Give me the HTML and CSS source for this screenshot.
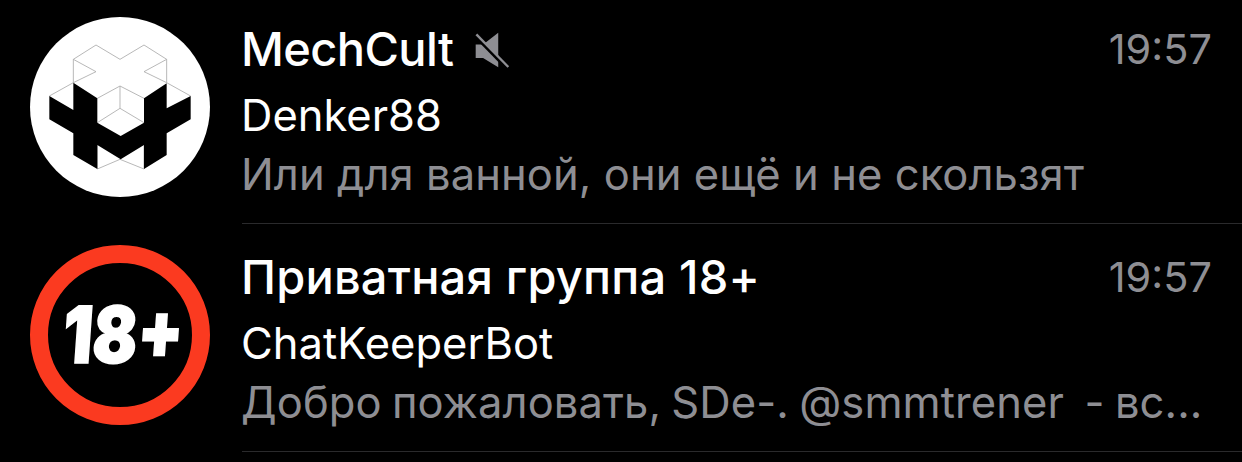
FILE: index.html
```html
<!DOCTYPE html>
<html lang="ru">
<head>
    <meta charset="UTF-8">
    <title>Chats</title>
    <link rel="stylesheet" href="styles.css">
</head>
<body>

<main class="chat-list">
    <section class="chat">
        <svg class="avatar" viewBox="30 51 540 540">
            <circle cx="300" cy="321" r="270" fill="#fff"/>
            <path class="lines" d="M160 248V178L228 135L300 178L372 135L440 178V248M160 178L228 215L160 248L88 288M440 178L372 215L440 248L512 288M232 295L300 258L372 295M300 258V325M232 368L300 325L372 368M232 435V507L300 478L372 507V435"/>
            <path d="M88 288L160 330V248L232 295V368L302 408L372 368V295L440 250V325L512 288V358L440 400V465L372 507V435L302 478L232 435V507L160 465V400L88 358Z"/>
        </svg>
        <div class="chat-body">
            <div class="chat-head">
                <h2 class="chat-title chat-title-latin">MechCult</h2>
                <svg class="mute" viewBox="100 35 110 110">
                    <path d="M108 75H130L175 40V143L130 115H108Z"/>
                    <path class="mute-gap" d="M106 50L201 147"/>
                    <path class="mute-line" d="M110 45L205 142"/>
                </svg>
                <time class="chat-time">19:57</time>
            </div>
            <div class="chat-sender">Denker88</div>
            <div class="chat-text">Или для ванной, они ещё и не скользят</div>
        </div>
    </section>

    <section class="chat">
        <svg class="avatar" viewBox="30 30 540 540">
            <circle cx="300" cy="300" r="243" stroke="#fb3a20" stroke-width="54"/>
            <text class="age" transform="translate(124 384) skewX(-4)" textLength="360" lengthAdjust="spacingAndGlyphs">18+</text>
        </svg>
        <div class="chat-body">
            <div class="chat-head">
                <h2 class="chat-title">Приватная группа 18+</h2>
                <time class="chat-time">19:57</time>
            </div>
            <div class="chat-sender">ChatKeeperBot</div>
            <div class="chat-text chat-text-mixed">Добро пожаловать, SDe-. @smmtrener&nbsp; - вс...</div>
        </div>
    </section>
</main>

</body>
</html>
```

FILE: styles.css
```css
:root {
    --bg-color: #000000;
    --text-color: #ffffff;
    --muted-color: #8e8e93;
    --border-color: #2a2a2c;
}

* { margin: 0; padding: 0; box-sizing: border-box; }

body {
    background-color: var(--bg-color);
    color: var(--text-color);
    font-family: 'Inter', 'Noto Sans', sans-serif;
    overflow: hidden;
}

.chat-list {
    padding-left: 30px;
    margin-top: -4px;
}

.chat {
    display: flex;
    gap: 32px;
    height: 228px;
    padding-top: 21px;
}

.avatar {
    flex: none;
    width: 180px;
    height: 180px;
}
.lines {
    fill: none;
    stroke: #aaa;
    stroke-width: 2.5;
}
.age {
    font-size: 236px;
    font-weight: 900;
    fill: #fff;
    stroke: #fff;
    stroke-width: 5;
}

.chat-body {
    flex: 1;
    padding-right: 30px;
    border-bottom: 1px solid var(--border-color);
    margin-top: -21px;
    padding-top: 21px;
}

.chat-head {
    display: flex;
    align-items: center;
    height: 64px;
}
.chat-title {
    font-size: 47px;
    font-weight: 500;
    line-height: 64px;
    letter-spacing: 0.2px;
    margin-left: -1px;
}
.chat-title-latin {
    letter-spacing: -0.6px;
}
.mute {
    width: 37px;
    height: 37px;
    margin-left: 20px;
    fill: var(--muted-color);
}
.mute-gap {
    fill: none;
    stroke: var(--bg-color);
    stroke-width: 9;
}
.mute-line {
    fill: none;
    stroke: var(--muted-color);
    stroke-width: 7;
}
.chat-time {
    margin-left: auto;
    font-size: 41.5px;
    color: var(--muted-color);
}

.chat-sender {
    font-size: 43.5px;
    line-height: 68px;
    margin-left: -1px;
}
.chat-text {
    font-size: 43.5px;
    line-height: 50px;
    color: var(--muted-color);
    white-space: nowrap;
    letter-spacing: 0.08px;
    margin-left: -1px;
}
.chat-text-mixed {
    word-spacing: -2px;
}
```
